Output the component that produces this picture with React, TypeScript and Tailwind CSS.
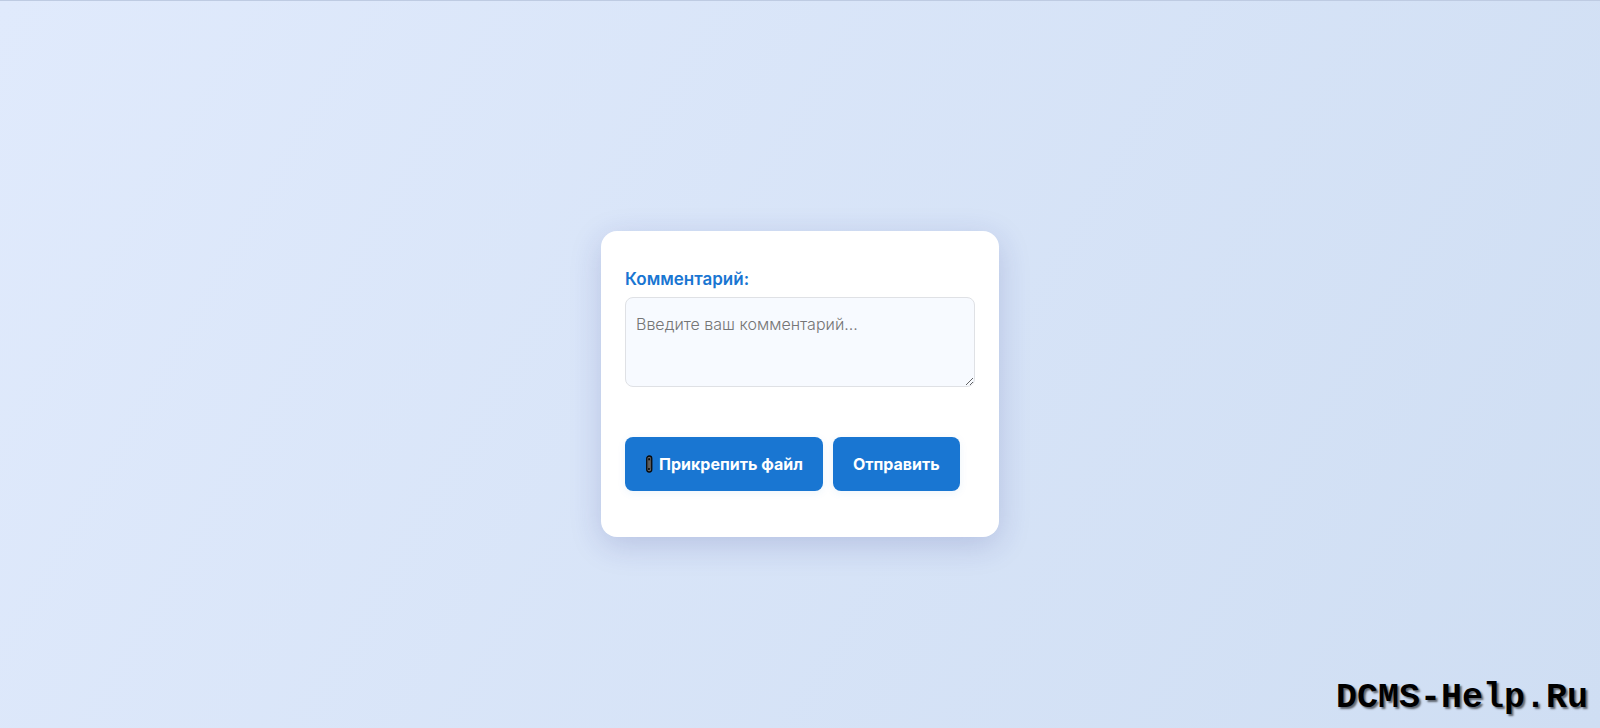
import { useRef, useState } from "react"
import type React from "react"

function ClipIcon() {
  return (
    <svg viewBox="0 0 8 18" className="w-2 h-[18px] shrink-0" aria-hidden="true">
      <rect x="1.75" y="1" width="5" height="16" rx="2.5" fill="#666" stroke="#080808" strokeWidth="1.3" />
      <path d="M3.2 13V5M5.3 5v9" fill="none" stroke="#444" strokeWidth="0.5" />
      <path d="M3.2 3.2h2v2h-2zM3.2 13h1.5v2H3.2z" fill="#080808" />
    </svg>
  )
}

const buttonClass =
  "flex items-center gap-[6px] h-[54px] px-5 rounded-lg bg-[#1976d2] text-white text-base font-bold shadow-[0_2px_8px_rgba(25,118,210,0.08)] hover:bg-[#1565c0] transition-colors"

export default function App() {
  const [comment, setComment] = useState("")
  const fileInput = useRef<HTMLInputElement>(null)

  const handleSubmit = (e: React.FormEvent<HTMLFormElement>) => {
    e.preventDefault()
    setComment("")
  }

  return (
    <div className="min-h-screen flex flex-col border-t border-[#becbe2] bg-[linear-gradient(120deg,#e0eafc_0%,#cfdef3_100%)] font-[Inter,sans-serif]">
      <main className="flex-1 flex items-center justify-center pt-[38px]">
        <form
          onSubmit={handleSubmit}
          className="w-full max-w-[398px] px-6 pt-9 pb-[46px] rounded-2xl bg-white shadow-[0_8px_32px_rgba(31,38,135,0.18)]"
        >
          <label htmlFor="comment" className="block mb-[6px] text-[17px] leading-6 font-semibold text-[#1976d2]">
            Комментарий:
          </label>
          <textarea
            id="comment"
            value={comment}
            onChange={(e) => setComment(e.target.value)}
            placeholder="Введите ваш комментарий..."
            className="block w-full h-[90px] px-[10px] py-[14px] rounded-lg border border-[#dfe1e5] bg-[#f7faff] text-base leading-6 font-light resize-y placeholder:text-[#757575] focus:outline-none focus:border-[#1976d2]"
          />
          <div className="flex gap-[10px] mt-[50px]">
            <button type="button" onClick={() => fileInput.current?.click()} className={buttonClass}>
              <ClipIcon />
              Прикрепить файл
            </button>
            <input ref={fileInput} type="file" aria-label="Прикрепить файл" className="hidden" />
            <button type="submit" className={buttonClass}>
              Отправить
            </button>
          </div>
        </form>
      </main>
      <a
        href="#"
        className="absolute right-3 bottom-[6px] font-['Liberation_Mono',monospace] text-[35px] leading-12 font-bold text-black [text-shadow:2px_2px_2px_rgba(0,0,0,0.55)]"
      >
        DCMS-Help.Ru
      </a>
    </div>
  )
}
